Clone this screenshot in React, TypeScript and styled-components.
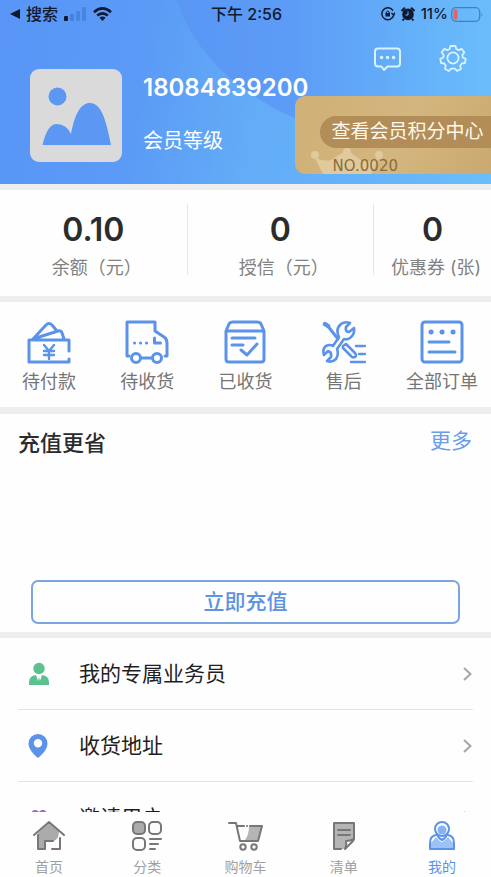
import React from "react";
import styled, { createGlobalStyle } from "styled-components";

const blue = "#5b93ea";
const cjk = '"Noto Sans CJK SC", sans-serif';

const GlobalStyle = createGlobalStyle`
  * { box-sizing: border-box; }
  body { margin: 0; background: #fefefe; font-family: Inter, ${cjk}; color: #222; }
  button { font: inherit; color: inherit; background: none; border: 0; padding: 0; cursor: pointer; }
  a { color: inherit; text-decoration: none; }
  svg { display: block; flex: none; }
  h1, h2, p, dl, dd, ul { margin: 0; padding: 0; }
`;

const Screen = styled.div`
  display: flex;
  flex-direction: column;
  height: 100vh;
  overflow: hidden;
`;

const Content = styled.main`
  flex: 1;
  min-height: 0;
  overflow-y: auto;
  scrollbar-width: none;
`;

const Header = styled.header`
  position: relative;
  background: linear-gradient(100deg, #5895f7 0%, #5b9bf6 30%, #63acf7 52%, #65b2fa 75%, #6abefb 100%);
`;

const Swoosh = styled.svg`
  position: absolute;
  top: 0;
  right: 0;
  width: 64%;
  height: 100%;
`;

const StatusBar = styled.div`
  position: relative;
  display: grid;
  grid-template-columns: 1fr auto 1fr;
  align-items: center;
  height: 28px;
  padding: 0 8px 0 10px;
  font-size: 16px;
  font-weight: 500;
  line-height: 20px;
  color: #10192f;
`;

const StatusGroup = styled.div<{ $end?: boolean }>`
  display: flex;
  align-items: center;
  gap: 6px;
  justify-content: ${(p) => (p.$end ? "flex-end" : "flex-start")};
`;

const Battery = styled.div`
  display: flex;
  align-items: center;
  gap: 3px;
  font-size: 15px;
`;

const Profile = styled.div`
  position: relative;
  display: flex;
  padding: 16px 24px 22px 30px;
`;

const Avatar = styled.div`
  margin-top: 25px;
`;

const Identity = styled.div`
  display: flex;
  flex-direction: column;
  gap: 26px;
  margin: 29px 0 0 21px;
  color: #fff;
`;

const Phone = styled.h1`
  font-size: 24px;
  line-height: 30px;
  font-weight: 600;
`;

const Level = styled.p`
  font-size: 20px;
  line-height: 24px;
`;

const Tools = styled.div`
  display: flex;
  gap: 38px;
  margin-left: auto;
  height: 28px;
`;

const MemberCard = styled.div`
  position: absolute;
  right: 0;
  bottom: 10px;
  width: 40%;
  height: 78px;
  padding: 20px 0 0 25px;
  overflow: hidden;
  border-radius: 10px 0 0 10px;
  background: linear-gradient(115deg, #cfb077 0%, #d3b67e 55%, #cba970 100%);
`;

const Crown = styled.svg`
  position: absolute;
  left: 15px;
  bottom: 0;
`;

const PointsLink = styled.a`
  position: relative;
  display: block;
  height: 32px;
  padding-left: 12px;
  border-radius: 16px 0 0 16px;
  background: #b28d58;
  color: #fff8ec;
  font-size: 19px;
  line-height: 32px;
  white-space: nowrap;
`;

const CardNumber = styled.p`
  position: relative;
  padding: 10px 0 0 13px;
  font-family: "DejaVu Sans", sans-serif;
  font-size: 15px;
  line-height: 16px;
  color: #8c6c3b;
`;

const Panel = styled.section`
  border-top: 6px solid #eee;
`;

const Stats = styled.dl`
  display: grid;
  grid-template-columns: 38fr 38fr 24fr;
  padding: 14px 0 21px;
`;

const Stat = styled.div`
  display: flex;
  flex-direction: column-reverse;
  justify-content: flex-end;
  align-items: center;
  min-width: 0;
  height: 71px;
  & + & { border-left: 1px solid #e6e6e6; }
`;

const StatValue = styled.dd`
  font-size: 32px;
  font-weight: 600;
  line-height: 38px;
  padding-top: 7px;
  color: #2c2c2c;
`;

const StatLabel = styled.dt`
  font-size: 18px;
  line-height: 24px;
  padding: 7px 0 0 7px;
  white-space: nowrap;
  color: #828282;
`;

const Orders = styled.nav`
  display: grid;
  grid-template-columns: repeat(5, 1fr);
  padding: 18px 0 12px;
`;

const OrderLink = styled.a`
  display: flex;
  flex-direction: column;
  align-items: center;
  gap: 5px;
  font-size: 18px;
  line-height: 26px;
  white-space: nowrap;
  color: #757575;
`;

const Recharge = styled(Panel)`
  display: flex;
  flex-direction: column;
  min-height: 225px;
  padding-bottom: 8px;
  border-top-width: 7px;
`;

const RechargeHead = styled.div`
  display: flex;
  justify-content: space-between;
  padding: 14px 19px 0 18px;
`;

const Title = styled.h2`
  font-size: 22px;
  line-height: 30px;
  font-weight: 500;
  color: #2b2b2b;
`;

const More = styled.a`
  font-size: 21px;
  line-height: 26px;
  color: #699cea;
`;

const RechargeButton = styled.button`
  margin: auto 31px 0;
  height: 44px;
  border: 2px solid #7aa5e2;
  border-radius: 7px;
  font-size: 21px;
  font-weight: 500;
  line-height: 30px;
  color: #5f92df;
`;

const Menu = styled.ul`
  list-style: none;
  padding: 0 18px;
`;

const MenuItem = styled.li`
  border-bottom: 1px solid #e4e4e4;
`;

const MenuLink = styled.a`
  display: grid;
  grid-template-columns: 61px 1fr auto;
  align-items: center;
  height: 71px;
  padding-right: 1px;
  font-size: 21px;
  line-height: 30px;
  color: #1f1f1f;
`;

const MenuIcon = styled.span`
  padding-left: 10px;
`;

const TabBar = styled.nav`
  display: grid;
  grid-template-columns: repeat(5, 1fr);
  padding: 8px 0 0;
  height: 65px;
  background: #fefefe;
`;

const Tab = styled.a<{ $active?: boolean }>`
  display: flex;
  flex-direction: column;
  align-items: center;
  gap: 6px;
  font-size: 14px;
  line-height: 20px;
  color: ${(p) => (p.$active ? blue : "#a0a0a0")};
`;

const OrderSvg = ({ children }: { children: React.ReactNode }) => (
  <svg width="44" height="44" viewBox="0 0 44 44" fill="none" stroke={blue} strokeWidth="3" strokeLinecap="round" strokeLinejoin="round" aria-hidden="true">
    {children}
  </svg>
);

const orders = [
  {
    label: "待付款",
    icon: (
      <OrderSvg>
        <path d="M42 31V20H2v22h40v-3M6 19 19 5q3-3 6 0l5 6M9 18l22-7q3-1 4 2l2 6" />
        <path d="m17 25 5 6 5-6M22 31v8M17 31h10M17 35h10" strokeWidth="2.4" />
      </OrderSvg>
    ),
  },
  {
    label: "待收货",
    icon: (
      <OrderSvg>
        <path d="M4 36H2V2h28v9l9 6q3 2 3 6v13h-2M16 38h11" />
        <circle cx="11" cy="38" r="4.5" />
        <circle cx="32" cy="38" r="4.5" />
        <path d="M9.500 23h.1M15.500 23h.1M21.500 23h.1M29.500 18v5h6" />
      </OrderSvg>
    ),
  },
  {
    label: "已收货",
    icon: (
      <OrderSvg>
        <path d="M3 11 6 4q1-2 4-2h24q3 0 4 2l3 7v28q0 3-3 3H6q-3 0-3-3V11h38M9 18h23M9 25h11M18 30l6 5 10-11" />
      </OrderSvg>
    ),
  },
  {
    label: "售后",
    icon: (
      <OrderSvg>
        <path d="m3 4 3 2" strokeWidth="4.5" />
        <path d="m5 5 11 14" strokeWidth="3" />
        <path d="M17 17Q13 9 19 4q4-3 9-1l-4 4q-1 5 3 5l5-4q1 6-4 10-3 2-6 1l-7 10q2 5-1 10-4 4-9 2l4-4q1-5-3-6l-4 4q-2-6 2-9 4-2 7 0Z" strokeWidth="2.6" />
        <path d="m21 26 3-2 9 9q2 3 0 4-3 1-4-1l-8-8Z" strokeWidth="2.6" />
        <path d="M34 26h9M37 34h6M29 42h14" strokeWidth="2.5" />
      </OrderSvg>
    ),
  },
  {
    label: "全部订单",
    icon: (
      <OrderSvg>
        <rect x="2" y="2" width="40" height="40" rx="3" />
        <path d="M9 22h20M9 32h26" />
        <path d="M11 12h.1M22 12h.1M33 12h.1" strokeWidth="5" />
      </OrderSvg>
    ),
  },
];

const TabSvg = ({ children, color = "#777", width = 30 }: { children: React.ReactNode; color?: string; width?: number }) => (
  <svg width={width} height="31" viewBox={`0 0 ${width} 31`} fill="none" stroke={color} strokeWidth="2" strokeLinecap="round" strokeLinejoin="round" aria-hidden="true">
    {children}
  </svg>
);

const tabs = [
  {
    label: "首页",
    icon: (
      <TabSvg width={34}>
        <path d="M6 13v16h8v-8h7q6-1 6-10L17 3Z" fill="#ababab" stroke="none" />
        <path d="M2 15 17 2l15 13M6 15v14h7v-8h8M28 18v11h-8" />
      </TabSvg>
    ),
  },
  {
    label: "分类",
    icon: (
      <TabSvg>
        <rect x="1" y="2" width="12" height="12" rx="4" fill="#ababab" />
        <rect x="17" y="2" width="12" height="12" rx="4" />
        <rect x="1" y="18" width="12" height="12" rx="4" />
        <path d="M18 19h11M18 24h8M18 29h5" />
      </TabSvg>
    ),
  },
  {
    label: "购物车",
    icon: (
      <TabSvg width={36}>
        <path d="M22 6h13l-3 14H18q4-5 4-14Z" fill="#b5b5b5" stroke="none" />
        <path d="M2 3h7l4 18h18l4-15H23M11 6h6M20 6h.1" />
        <circle cx="16" cy="27" r="2.7" />
        <circle cx="27" cy="27" r="2.7" />
      </TabSvg>
    ),
  },
  {
    label: "清单",
    icon: (
      <TabSvg width={24}>
        <path d="M2 3h20v16L12 29H2Z" fill="#b5b5b5" stroke="none" />
        <path d="M9 29H2V3h20v16" />
        <path d="M13 29q2-4 1-8 4 0 8-2l-1 2Z" fill="#fefefe" />
        <path d="M6 10h12M6 15h12" />
      </TabSvg>
    ),
  },
  {
    label: "我的",
    active: true,
    icon: (
      <TabSvg color={blue} width={28}>
        <circle cx="14" cy="9" r="7" />
        <circle cx="14" cy="10" r="4.5" fill="#86b2f1" stroke="none" />
        <path d="M9 14q1 4 5 6 4-2 5-6" />
        <path d="M3 28v-5l5-6q4 5 6 5 3-1 6-5l5 6v5Z" fill="#9cc2f7" stroke="none" />
        <path d="M8 15q-6 1-6 8v6h24v-6q0-7-6-8" />
      </TabSvg>
    ),
  },
];

const menu = [
  {
    label: "我的专属业务员",
    icon: (
      <svg width="22" height="24" viewBox="0 0 22 24" fill="#5bc28e" aria-hidden="true">
        <circle cx="11" cy="6.500" r="5.700" />
        <path d="M8 13q-7 1-7 7v3h20v-3q0-6-7-7l-2 6-1-4-1 4Z" />
      </svg>
    ),
  },
  {
    label: "收货地址",
    icon: (
      <svg width="20" height="24" viewBox="0 0 20 24" fill={blue} fillRule="evenodd" aria-hidden="true">
        <path d="M10 0a9.500 9.500 0 0 0-9.500 9.500C.5 15 6 21 10 24c4-3 9.500-9 9.500-14.500A9.500 9.500 0 0 0 10 0Zm0 5a4.200 4.200 0 1 1 0 8.400A4.200 4.200 0 0 1 10 5Z" />
      </svg>
    ),
  },
  {
    label: "邀请用户",
    icon: (
      <svg width="22" height="16" viewBox="0 0 22 16" fill="#9b6bc4" aria-hidden="true">
        <path d="M11 2C9-1 3-1 3 5c0 4 5 8 8 10 3-2 8-6 8-10 0-6-6-6-8-3Z" />
      </svg>
    ),
  },
];

const stats = [
  { label: "余额（元）", value: "0.10" },
  { label: "授信（元）", value: "0" },
  { label: "优惠券 (张)", value: "0" },
];

export default function App() {
  return (
    <Screen>
      <GlobalStyle />
      <Content>
        <Header>
          <Swoosh viewBox="0 0 314 184" preserveAspectRatio="none" aria-hidden="true">
            <defs>
              <linearGradient id="swoosh" x1="0" x2="1" y1="0" y2="0">
                <stop offset="0" stopColor="#5a97f5" />
                <stop offset="0.35" stopColor="#5c9bf6" />
                <stop offset="1" stopColor="#6abdfb" />
              </linearGradient>
            </defs>
            <path d="M0 0C12 42 48 77 69 90c18 13 35 24 60 32q90 24 185 10V0Z" fill="url(#swoosh)" />
          </Swoosh>
          <StatusBar>
            <StatusGroup>
              <svg width="10" height="10" viewBox="0 0 10 10" fill="#10192f" aria-hidden="true"><path d="M0 5 10 0v10Z" /></svg>
              <span>搜索</span>
              <svg width="23" height="14" viewBox="0 0 23 14" fill="#3f78cc" aria-hidden="true">
                <rect y="9" width="4" height="5" rx="1" fill="#10192f" />
                <rect x="6" y="7" width="4" height="7" rx="1" opacity=".7" />
                <rect x="12" y="4" width="4" height="10" rx="1" opacity=".6" />
                <rect x="18" y="0" width="4" height="14" rx="1" opacity=".6" />
              </svg>
              <svg width="19" height="14" viewBox="0 0 19 14" fill="none" stroke="#10192f" strokeWidth="2.600" aria-hidden="true">
                <path d="M1 5.200q8.500-7.600 17 0M4.200 8.600q5.300-4.600 10.600 0" />
                <path d="m9.500 14-3-3.200q3-2.400 6 0Z" fill="#10192f" stroke="none" />
              </svg>
            </StatusGroup>
            <span>下午 2:56</span>
            <StatusGroup $end>
              <svg width="14" height="14" viewBox="0 0 14 14" fill="none" stroke="#10192f" strokeWidth="1.500" aria-hidden="true">
                <path d="M12.600 8.500A6 6 0 1 1 12 3.700M10.500 6l2.300 2L14 5.500" />
                <rect x="4.500" y="6" width="4.500" height="3.500" fill="#10192f" stroke="none" />
                <path d="M5.300 6.500V5q1.500-2 3 0v1.500" strokeWidth="1" />
              </svg>
              <svg width="14" height="14" viewBox="0 0 14 14" fill="#10192f" aria-hidden="true">
                <circle cx="7" cy="7.400" r="5.800" />
                <path d="M.5 4 4 .7M13.500 4 10 .7M3 12l-1.500 1.500M11 12l1.500 1.500" stroke="#10192f" strokeWidth="2" />
                <path d="M7 4.500v3.500H4.500" fill="none" stroke="#78b3f8" />
              </svg>
              <Battery>
                <span>11%</span>
                <svg width="32" height="15" viewBox="0 0 32 15" fill="none" aria-hidden="true">
                  <rect x=".7" y=".7" width="28" height="13.600" rx="4" stroke="#4a7db8" strokeWidth="1.200" />
                  <rect x="2.500" y="2.500" width="4" height="10" rx="1.500" fill="#e0646c" />
                  <path d="M30.500 5.500q1.500 2 0 4Z" fill="#4a7db8" />
                </svg>
              </Battery>
            </StatusGroup>
          </StatusBar>
          <Profile>
            <Avatar>
              <svg width="92" height="93" viewBox="0 0 92 93" role="img" aria-label="头像">
                <rect width="92" height="93" rx="9" fill="#dadada" />
                <circle cx="27.500" cy="27.500" r="9" fill="#5b97f3" />
                <path d="M12.500 76C16 62 20 55 27 55q9 0 14 10C45 44 51 34 60 34c11 0 16 16 21 42Z" fill="#5b97f3" />
              </svg>
            </Avatar>
            <Identity>
              <Phone>18084839200</Phone>
              <Level>会员等级</Level>
            </Identity>
            <Tools>
              <button aria-label="消息">
                <svg width="27" height="28" viewBox="0 0 27 28" fill="none" stroke="#d9f2ff" strokeWidth="2" strokeLinejoin="round" aria-hidden="true">
                  <path d="M4 4.500h19q3 0 3 3v12q0 3-3 3H13.500L10 26l-2.500-3.500H4q-3 0-3-3v-12q0-3 3-3Z" />
                  <path d="M7.500 13.500h.1M13.500 13.500h.1M19.500 13.500h.1" strokeWidth="3.500" strokeLinecap="round" />
                </svg>
              </button>
              <button aria-label="设置">
                <svg width="28" height="28" viewBox="0 0 28 28" fill="none" stroke="#d9f2ff" strokeWidth="1.800" strokeLinejoin="round" aria-hidden="true">
                  <path d="m11.500 2-.8 3-2.400 1.100-3-1.300-2.600 3.600 2 2.600-.4 2.500-3 1.300.8 4.200 3.200.5 1.500 2.200-.8 3.200 3.800 2.100 2.300-2.300h3.800l2.300 2.300 3.800-2.100-.8-3.200 1.500-2.200 3.200-.5.8-4.200-3-1.300-.4-2.500 2-2.600-2.600-3.600-3 1.300L17.300 5l-.8-3Z" />
                  <circle cx="14" cy="14" r="5.600" />
                </svg>
              </button>
            </Tools>
          </Profile>
          <MemberCard>
            <Crown width="74" height="26" viewBox="0 0 74 26" fill="#e0ca9c" aria-hidden="true">
              <path d="M13 26 4 8q7 6 17 4L37 2l15 11q12 2 18-5l-9 18Z" />
              <circle cx="5" cy="7" r="4" />
              <circle cx="37" cy="4" r="4" />
              <circle cx="69" cy="7" r="4" />
            </Crown>
            <PointsLink href="#points">查看会员积分中心</PointsLink>
            <CardNumber>NO.0020</CardNumber>
          </MemberCard>
        </Header>

        <Panel>
          <Stats>
            {stats.map((s) => (
              <Stat key={s.label}>
                <StatLabel>{s.label}</StatLabel>
                <StatValue>{s.value}</StatValue>
              </Stat>
            ))}
          </Stats>
        </Panel>

        <Panel>
          <Orders aria-label="订单">
            {orders.map((o) => (
              <OrderLink href="#orders" key={o.label}>
                {o.icon}
                {o.label}
              </OrderLink>
            ))}
          </Orders>
        </Panel>

        <Recharge>
          <RechargeHead>
            <Title>充值更省</Title>
            <More href="#more">更多</More>
          </RechargeHead>
          <RechargeButton>立即充值</RechargeButton>
        </Recharge>

        <Panel>
          <Menu>
            {menu.map((m) => (
              <MenuItem key={m.label}>
                <MenuLink href="#menu">
                  <MenuIcon>{m.icon}</MenuIcon>
                  {m.label}
                  <svg width="9" height="14" viewBox="0 0 9 14" fill="none" stroke="#a5a5a5" strokeWidth="2" aria-hidden="true">
                    <path d="m1 1 6.500 6L1 13" />
                  </svg>
                </MenuLink>
              </MenuItem>
            ))}
          </Menu>
        </Panel>
      </Content>

      <TabBar aria-label="主导航">
        {tabs.map((t) => (
          <Tab href="#tab" key={t.label} $active={t.active} aria-current={t.active ? "page" : undefined}>
            {t.icon}
            {t.label}
          </Tab>
        ))}
      </TabBar>
    </Screen>
  );
}
